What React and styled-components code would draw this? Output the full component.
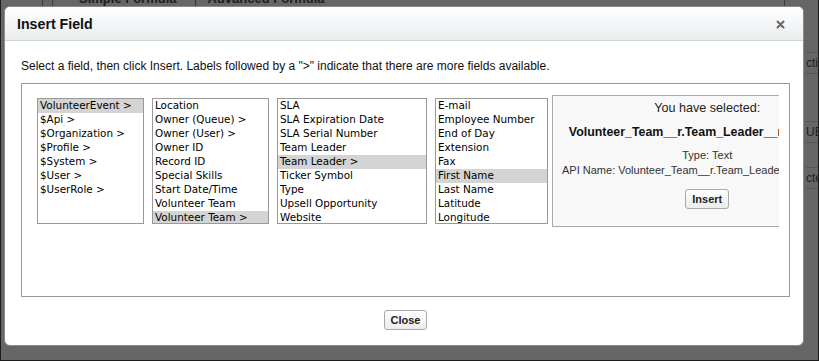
import React from "react";
import styled, { createGlobalStyle } from "styled-components";

const GlobalStyle = createGlobalStyle`
  html, body {
    margin: 0;
    padding: 0;
    background: #666;
  }
  * {
    box-sizing: border-box;
  }
`;

const lists = [
  {
    width: 107,
    items: ["VolunteerEvent >", "$Api >", "$Organization >", "$Profile >", "$System >", "$User >", "$UserRole >"],
    selected: 0,
  },
  {
    width: 117,
    items: [
      "Location",
      "Owner (Queue) >",
      "Owner (User) >",
      "Owner ID",
      "Record ID",
      "Special Skills",
      "Start Date/Time",
      "Volunteer Team",
      "Volunteer Team >",
    ],
    selected: 8,
  },
  {
    width: 150,
    items: [
      "SLA",
      "SLA Expiration Date",
      "SLA Serial Number",
      "Team Leader",
      "Team Leader >",
      "Ticker Symbol",
      "Type",
      "Upsell Opportunity",
      "Website",
    ],
    selected: 4,
  },
  {
    width: 113,
    items: [
      "E-mail",
      "Employee Number",
      "End of Day",
      "Extension",
      "Fax",
      "First Name",
      "Last Name",
      "Latitude",
      "Longitude",
    ],
    selected: 5,
  },
];

function App() {
  return (
    <>
      <GlobalStyle />
      <Screen>
        <Backdrop>
          <TabLabel>Simple Formula</TabLabel>
          <TabLabel>Advanced Formula</TabLabel>
        </Backdrop>
        <BackLine style={{ left: 41 }} />
        <BackLine style={{ left: 51 }} />
        <BackLine style={{ left: 783 }} />
        <SideText style={{ top: 52 }}>ctio</SideText>
        <SideText style={{ top: 121 }}>UE</SideText>
        <SideText style={{ top: 167 }}>cte</SideText>

        <Dialog>
          <Header>
            <Title>Insert Field</Title>
            <CloseX aria-label="Close">
              <svg width="9" height="9" viewBox="0 0 9 9">
                <path d="M1.5 1.5 L7.5 7.5 M7.5 1.5 L1.5 7.5" stroke="#666" strokeWidth="2" strokeLinecap="round" />
              </svg>
            </CloseX>
          </Header>
          <Body>
            <Hint>
              Select a field, then click Insert. Labels followed by a "&gt;" indicate that there are more fields
              available.
            </Hint>
            <Frame>
              <Columns>
                {lists.map((list, i) => (
                  <List key={i} $width={list.width}>
                    {list.items.map((item, j) => (
                      <Option key={item} $selected={j === list.selected}>
                        {item}
                      </Option>
                    ))}
                  </List>
                ))}
                <Selected>
                  <SelectedHead>You have selected:</SelectedHead>
                  <SelectedName>Volunteer_Team__r.Team_Leader__r.FirstName</SelectedName>
                  <Meta>Type: Text</Meta>
                  <Meta>API Name: Volunteer_Team__r.Team_Leader__r.FirstName</Meta>
                  <Button $top={11}>Insert</Button>
                </Selected>
              </Columns>
            </Frame>
            <Footer>
              <Button>Close</Button>
            </Footer>
          </Body>
        </Dialog>
      </Screen>
    </>
  );
}

const Screen = styled.div`
  position: relative;
  width: 819px;
  height: 361px;
  overflow: hidden;
  background: #666;
  border: 1px solid #1c1c1c;
  border-top: none;
  font-family: "Liberation Sans", Arial, sans-serif;
`;

const Backdrop = styled.div`
  display: flex;
  gap: 18px;
  padding-left: 78px;
  margin-top: -9px;
  height: 15px;
  font-size: 13px;
  font-weight: bold;
  color: #1e1e1e;
`;

const TabLabel = styled.span`
  & + & {
    border-left: 1px solid #333;
    padding-left: 12px;
  }
`;

const BackLine = styled.div`
  position: absolute;
  top: 0;
  width: 1px;
  height: 6px;
  background: #3e3e3e;
`;

const SideText = styled.div`
  position: absolute;
  left: 805px;
  width: 14px;
  padding: 3px 0;
  border-top: 1px solid #555;
  border-bottom: 1px solid #555;
  font-size: 12px;
  color: #1e1e1e;
  overflow: hidden;
`;

const Dialog = styled.div`
  position: absolute;
  left: 3px;
  top: 6px;
  width: 800px;
  height: 340px;
  background: #fff;
  border-radius: 6px;
  border: 1px solid #8a8a8a;
  overflow: hidden;
`;

const Header = styled.div`
  display: flex;
  align-items: center;
  justify-content: space-between;
  height: 34px;
  padding: 0 16px 0 12px;
  background: linear-gradient(#ffffff, #e9ecee);
  border-bottom: 1px solid #d2d6d9;
`;

const Title = styled.h2`
  margin: 0;
  font-size: 14.2px;
  font-weight: bold;
  color: #111;
`;

const CloseX = styled.div`
  display: flex;
  align-items: center;
  justify-content: center;
  width: 14px;
  height: 14px;
  margin-top: 1px;
`;

const Body = styled.div`
  padding: 18px 14px 0 16px;
`;

const Hint = styled.p`
  margin: 0;
  font-size: 12px;
  line-height: 14px;
  color: #111;
`;

const Frame = styled.div`
  margin-top: 10px;
  width: 769px;
  height: 214px;
  border: 1px solid #9a9a9a;
  padding: 11px 10px 0 15px;
`;

const Columns = styled.div`
  display: flex;
  align-items: flex-start;
  gap: 8px;
  overflow: hidden;
`;

const List = styled.div`
  flex-shrink: 0;
  width: ${(p) => p.$width}px;
  height: 126px;
  margin-top: 3px;
  border: 1px solid #999;
  overflow: hidden;
  font-family: "DejaVu Sans", Verdana, sans-serif;
  font-size: 10.4px;
`;

const Option = styled.div`
  height: 14px;
  line-height: 13px;
  padding-left: 2px;
  white-space: nowrap;
  color: #000;
  background: ${(p) => (p.$selected ? "#d4d4d4" : "transparent")};
`;

const Selected = styled.div`
  flex-shrink: 0;
  display: flex;
  flex-direction: column;
  align-items: center;
  height: 132px;
  margin-left: -4px;
  padding: 5px 9px 0;
  background: #f8f8f8;
  border: 1px solid #aaa;
  color: #222;
  white-space: nowrap;
`;

const SelectedHead = styled.div`
  font-size: 12.6px;
  line-height: 14px;
`;

const SelectedName = styled.div`
  margin-top: 10px;
  margin-bottom: 9px;
  font-size: 12.4px;
  font-weight: bold;
  line-height: 14px;
  color: #111;
`;

const Meta = styled.div`
  font-size: 11px;
  line-height: 15px;
  color: #333;
`;

const Button = styled.button`
  margin-top: ${(p) => p.$top || 0}px;
  height: 20px;
  padding: 0 6px;
  font-family: "Liberation Sans", Arial, sans-serif;
  font-size: 11px;
  font-weight: bold;
  color: #222;
  background: linear-gradient(#ffffff, #ececec);
  border: 1px solid #aaa;
  border-radius: 3px;
`;

const Footer = styled.div`
  display: flex;
  justify-content: center;
  width: 769px;
  margin-top: 13px;
`;

export default App;
